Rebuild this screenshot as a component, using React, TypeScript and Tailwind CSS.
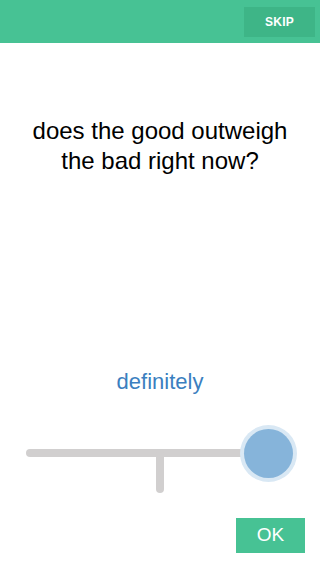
export default function App() {
  const font = { fontFamily: '"Liberation Sans", Arial, sans-serif' }
  return (
    <div className="w-[320px] h-[568px] bg-white flex flex-col overflow-hidden" style={font}>
      {/* Header */}
      <div className="h-[43px] bg-[#47c294] flex items-center justify-end pr-[5px] shrink-0">
        <button className="w-[71px] h-[30px] bg-[#3eb587] text-white text-[12px] font-bold tracking-wide">
          SKIP
        </button>
      </div>

      {/* Question */}
      <div className="pt-[73px] text-center text-[24px] leading-[30px] text-black">
        does the good outweigh
        <br />
        the bad right now?
      </div>

      <div className="flex-1" />

      {/* Answer label */}
      <div className="text-center text-[22px] text-[#3b7fc0] leading-[26px]">definitely</div>

      {/* Slider */}
      <div className="relative h-[89px] mt-[32px]">
        <div className="absolute left-[26px] top-[22px] w-[270px] h-[8px] rounded-full bg-[#d1cfcf]" />
        <div className="absolute left-[156px] top-[22px] w-[8px] h-[44px] rounded-full bg-[#d1cfcf]" />
        <div className="absolute left-[240px] top-[-2px] w-[57px] h-[57px] rounded-full bg-[#d9e8f4] flex items-center justify-center">
          <div className="w-[49px] h-[49px] rounded-full bg-[#86b4da]" />
        </div>
      </div>

      {/* OK */}
      <div className="flex justify-end pr-[15px] pb-[15px] pt-[2px]">
        <button className="w-[69px] h-[35px] bg-[#47c294] text-white text-[19px]">OK</button>
      </div>
    </div>
  )
}
